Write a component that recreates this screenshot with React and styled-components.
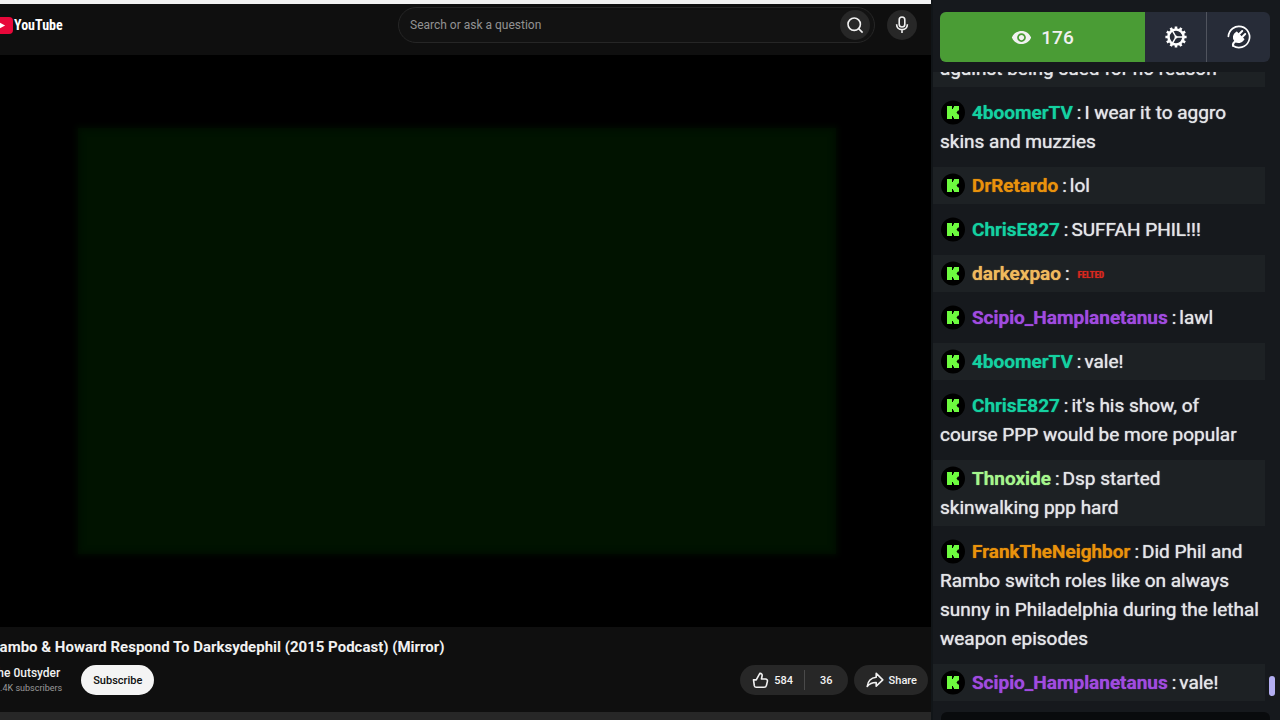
import React from "react";
import styled, { createGlobalStyle } from "styled-components";
import { MdVisibility } from "react-icons/md";

const messages = [
  { user: "Nylon", color: "#14d1a0", text: "you should get insurance against being sued for no reason" },
  { user: "4boomerTV", color: "#14d1a0", text: "I wear it to aggro skins and muzzies" },
  { user: "DrRetardo", color: "#e9920c", text: "lol" },
  { user: "ChrisE827", color: "#14d1a0", text: "SUFFAH PHIL!!!" },
  { user: "darkexpao", color: "#efb95c", emote: "FELTED" },
  { user: "Scipio_Hamplanetanus", color: "#a04be0", text: "lawl" },
  { user: "4boomerTV", color: "#14d1a0", text: "vale!" },
  { user: "ChrisE827", color: "#14d1a0", text: "it's his show, of course PPP would be more popular" },
  { user: "Thnoxide", color: "#a5f78c", text: "Dsp started skinwalking ppp hard" },
  {
    user: "FrankTheNeighbor",
    color: "#e9920c",
    text: "Did Phil and Rambo switch roles like on always sunny in Philadelphia during the lethal weapon episodes",
  },
  { user: "Scipio_Hamplanetanus", color: "#a04be0", text: "vale!" },
];

const App = () => {
  return (
    <>
      <GlobalStyle />
      <Screen>
        <Watch>
          <TabStrip />
          <Page>
            <TopBar>
              <Logo href="#" aria-label="YouTube">
                <svg width="24" height="17" viewBox="0 0 24 17">
                  <rect width="24" height="17" rx="4" fill="#e8083a" />
                  <path d="M9.5 4.8v7.4l6.6-3.7z" fill="#fff" />
                </svg>
                <LogoText>YouTube</LogoText>
              </Logo>
              <SearchBox>
                <SearchInput type="text" placeholder="Search or ask a question" aria-label="Search" />
                <RoundButton aria-label="Search">
                  <SearchIcon />
                </RoundButton>
              </SearchBox>
              <RoundButton aria-label="Search with your voice">
                <MicIcon />
              </RoundButton>
            </TopBar>
            <Player>
              <Frame />
            </Player>
            <Details>
              <Title>Rambo &amp; Howard Respond To Darksydephil (2015 Podcast) (Mirror)</Title>
              <Actions>
                <Channel>
                  <ChannelName href="#">The 0utsyder</ChannelName>
                  <Subscribers>11.4K subscribers</Subscribers>
                </Channel>
                <Subscribe>Subscribe</Subscribe>
                <Votes>
                  <VoteButton>
                    <LikeIcon />
                    584
                  </VoteButton>
                  <VoteButton $last>36</VoteButton>
                </Votes>
                <Share>
                  <ShareIcon />
                  Share
                </Share>
              </Actions>
            </Details>
            <Description />
          </Page>
        </Watch>
        <Chat>
          <ChatHeader>
            <Viewers>
              <MdVisibility size={21} />
              176
            </Viewers>
            <HeaderButton aria-label="Settings">
              <GearIcon />
            </HeaderButton>
            <HeaderButton $divided aria-label="Connections">
              <PlugIcon />
            </HeaderButton>
          </ChatHeader>
          <ChatBody>
            <MessageList>
              {messages.map((m, i) => (
                <Message key={i} $shaded={i % 2 === 0}>
                  <KickBadge />
                  <User $color={m.color}>{m.user}</User>
                  <Colon>:</Colon>
                  {m.emote ? <Emote>{m.emote}</Emote> : m.text}
                </Message>
              ))}
            </MessageList>
            <Scrollbar>
              <Thumb />
            </Scrollbar>
          </ChatBody>
          <Composer>
            <ChatInput aria-label="Send a message" />
          </Composer>
        </Chat>
      </Screen>
    </>
  );
};
export default App;

const SearchIcon = () => (
  <svg width="18" height="18" viewBox="0 0 18 18" fill="none" stroke="#f1f1f1" strokeWidth="1.6">
    <circle cx="8.2" cy="8.2" r="6.2" />
    <path d="M12.6 12.6l4 4" />
  </svg>
);

const MicIcon = () => (
  <svg width="18" height="18" viewBox="0 0 18 18" fill="none" stroke="#f1f1f1" strokeWidth="1.6">
    <rect x="6.2" y="1" width="5.6" height="10" rx="2.8" />
    <path d="M3.6 8.2c0 3.2 2.2 5.4 5.4 5.4s5.4-2.2 5.4-5.4M9 13.6V17" />
  </svg>
);

const LikeIcon = () => (
  <svg width="17" height="17" viewBox="0 0 18 18" fill="none" stroke="#f1f1f1" strokeWidth="1.7" strokeLinejoin="round">
    <path d="M1.6 8.3h2.9L8.3 1.5c1.6-.2 2.7 1 2.4 2.5l-.7 3.4h4.3c1.4 0 2.3 1.2 2 2.5l-1 4.3c-.3 1.3-1.2 2-2.5 2H4.5c-1 0-1.7-.5-2-1.5z" />
  </svg>
);

const ShareIcon = () => (
  <svg width="18" height="18" viewBox="0 0 18 18" fill="none" stroke="#f1f1f1" strokeWidth="1.6" strokeLinejoin="round">
    <path d="M10.2 2.4l6.6 6.5-6.6 6.3v-3.7c-4.2-.1-6.7 1.2-9 4 .6-5 3.6-8.8 9-9.3z" />
  </svg>
);

const teeth = [0, 30, 60, 90, 120, 150, 180, 210, 240, 270, 300, 330];

const GearIcon = () => (
  <svg width="22" height="22" viewBox="0 0 22 22" fill="none" stroke="#fff">
    <circle cx="11" cy="11" r="7.5" strokeWidth="2.6" />
    {teeth.map((a) => (
      <path key={a} d="M11 .4v2.8" strokeWidth="2.6" transform={`rotate(${a} 11 11)`} />
    ))}
    <path d="M11 11h7M11 11L7.5 4.9M11 11l-3.5 6.1" strokeWidth="1.5" />
    <circle cx="11" cy="11" r="1.5" fill="#fff" stroke="none" />
  </svg>
);

const PlugIcon = () => (
  <svg width="24" height="24" viewBox="0 0 24 24" fill="none" stroke="#fff" strokeLinecap="round">
    <path d="M1.4 11.4A10.6 10.6 0 1 1 6 20.7" strokeWidth="1.7" />
    <path d="M6 20.7c-.4-1.7.6-3.2 2.7-4.5" strokeWidth="2" />
    <path d="M9.6 7.4l7 7c-2 3-6 3.7-8.5 1.4-2.4-2.5-1.7-6.5 1.5-8.4z" fill="#fff" strokeWidth="1.6" strokeLinejoin="round" />
    <path d="M12 9.2l3.2-3.2M15 12.2l3.2-3.2" strokeWidth="2" />
  </svg>
);

const KickBadge = () => (
  <Badge width="25" height="25" viewBox="0 0 25 25" aria-hidden="true">
    <circle cx="13" cy="12.5" r="12" fill="#000" />
    <path d="M7 6h5v3h1V7.5h1V6h5v4.500h-1l-1.500 2 1.500 2h1V19h-5v-1.500h-1V16h-1v3H7z" fill="#6dfb3f" />
  </Badge>
);

const GlobalStyle = createGlobalStyle`
  * {
    box-sizing: border-box;
  }

  body {
    margin: 0;
    background: #0f0f0f;
    color: #f1f1f1;
    font-family: Roboto, "Liberation Sans", sans-serif;
  }

  button, input {
    border: 0;
    padding: 0;
    color: inherit;
    font-family: inherit;
  }
`;

const Screen = styled.div`
  display: flex;
  height: 100vh;
  overflow: hidden;
`;

const Watch = styled.main`
  flex: 1;
  min-width: 0;
  display: flex;
  flex-direction: column;
  overflow: hidden;
`;

const TabStrip = styled.div`
  height: 4px;
  flex-shrink: 0;
  background: #f2f2f2;
`;

/* the page is scrolled a little to the right */
const Page = styled.div`
  flex: 1;
  display: flex;
  flex-direction: column;
  margin-left: -17px;
`;

const TopBar = styled.header`
  display: flex;
  align-items: center;
  gap: 12px;
  padding: 3px 14px 12px 6px;
`;

const Logo = styled.a`
  display: flex;
  align-items: center;
  gap: 1px;
  margin-right: auto;
  color: #fff;
  text-decoration: none;
`;

const LogoText = styled.span`
  font-family: "Liberation Sans Narrow", "Roboto Condensed", Roboto, sans-serif;
  font-size: 14px;
  font-weight: 700;
`;

const SearchBox = styled.div`
  flex: 0 1 477px;
  display: flex;
  align-items: center;
  height: 36px;
  padding: 0 4px 0 11px;
  border: 1px solid #262626;
  border-radius: 18px;
  background: #121212;
`;

const SearchInput = styled.input`
  flex: 1;
  background: transparent;
  font-size: 12px;
  outline: none;

  &::placeholder {
    color: #929292;
    opacity: 1;
  }
`;

const RoundButton = styled.button`
  display: flex;
  align-items: center;
  justify-content: center;
  width: 30px;
  height: 30px;
  border-radius: 50%;
  background: #272727;
`;

const Player = styled.section`
  flex: 1;
  display: flex;
  align-items: center;
  justify-content: center;
  background: #000;
`;

const Frame = styled.div`
  width: 80%;
  aspect-ratio: 16 / 9;
  background: #011300;
  box-shadow: 0 0 6px 2px #010b00, inset 0 0 6px 1px #010a00;
`;

const Details = styled.section`
  padding: 10px 3px 17px 7px;
`;

const Title = styled.h1`
  margin: 0 0 8px;
  font-size: 15px;
  line-height: 20px;
  font-weight: 700;
  white-space: nowrap;
`;

const Actions = styled.div`
  display: flex;
  align-items: center;
  gap: 6px;
`;

const Channel = styled.div`
  display: flex;
  flex-direction: column;
  margin-right: 13px;
`;

const ChannelName = styled.a`
  color: #f1f1f1;
  font-size: 12px;
  line-height: 16px;
  font-weight: 500;
  text-decoration: none;
`;

const Subscribers = styled.span`
  color: #9a9a9a;
  font-size: 9px;
  line-height: 14px;
`;

const Pill = styled.div`
  display: flex;
  align-items: center;
  height: 30px;
  border-radius: 15px;
  background: #272727;
  font-size: 11px;
  font-weight: 500;
`;

const Subscribe = styled(Pill).attrs({ as: "button" })`
  margin-right: auto;
  padding: 0 12px;
  background: #f4f4f4;
  color: #0f0f0f;
`;

const Votes = styled(Pill)``;

const VoteButton = styled.button`
  display: flex;
  align-items: center;
  gap: 5px;
  height: 20px;
  padding: ${(props) => (props.$last ? "0 15px" : "0 11px 0 12px")};
  border-left: ${(props) => (props.$last ? "1px solid #4a4a4a" : "0")};
  background: transparent;
  font-size: 11px;
  font-weight: 500;
`;

const Share = styled(Pill).attrs({ as: "button" })`
  gap: 5px;
  padding: 0 11px 0 12px;
`;

const Description = styled.div`
  height: 8px;
  background: #272727;
`;

const Chat = styled.aside`
  flex: 0 0 349px;
  display: flex;
  flex-direction: column;
  border-left: 2px solid #111518;
  background: #16191d;
`;

const ChatHeader = styled.div`
  display: flex;
  height: 50px;
  margin: 12px 10px 10px 7px;
  border-radius: 6px;
  background: #272c38;
  overflow: hidden;
`;

const Viewers = styled.div`
  flex: 1;
  display: flex;
  align-items: center;
  justify-content: center;
  gap: 9px;
  background: #4a9c35;
  font-size: 19px;
  font-weight: 500;
`;

const HeaderButton = styled.button`
  display: flex;
  align-items: center;
  justify-content: center;
  width: ${(props) => (props.$divided ? "64px" : "61px")};
  border-left: ${(props) => (props.$divided ? "1px solid #50545e" : "0")};
  background: transparent;
`;

const ChatBody = styled.div`
  flex: 1;
  min-height: 0;
  display: flex;
`;

const MessageList = styled.div`
  flex: 1;
  display: flex;
  flex-direction: column;
  justify-content: flex-end;
  gap: 7px;
  overflow: hidden;
`;

const Message = styled.div`
  flex-shrink: 0;
  padding: 4px 5px 4px 7px;
  background: ${(props) => (props.$shaded ? "#1d2124" : "transparent")};
  color: #e4e6e8;
  font-size: 19px;
  line-height: 29px;
  font-weight: 400;
  text-shadow: 0 0 1px currentColor;
`;

const Badge = styled.svg`
  margin-right: 7px;
  vertical-align: -6px;
`;

const User = styled.span`
  color: ${(props) => props.$color};
  font-weight: 600;
`;

const Colon = styled.span`
  margin: 0 3px 0 4px;
`;

const Emote = styled.span`
  margin-left: 5px;
  color: #d8281f;
  font-family: "Liberation Sans Narrow", "Roboto Condensed", Roboto, sans-serif;
  font-size: 9px;
  font-weight: 700;
  line-height: 12px;
  vertical-align: middle;
`;

const Scrollbar = styled.div`
  display: flex;
  align-items: flex-end;
  width: 15px;
  padding: 0 5px 5px 4px;
`;

const Thumb = styled.div`
  width: 6px;
  height: 20px;
  border-radius: 3px;
  background: #b3aef2;
`;

const Composer = styled.div`
  display: flex;
  align-items: flex-start;
  height: 19px;
  padding: 11px 10px 0 8px;
  overflow: hidden;
`;

const ChatInput = styled.input`
  flex: 1;
  height: 40px;
  border-radius: 6px;
  background: #090b0d;
`;
